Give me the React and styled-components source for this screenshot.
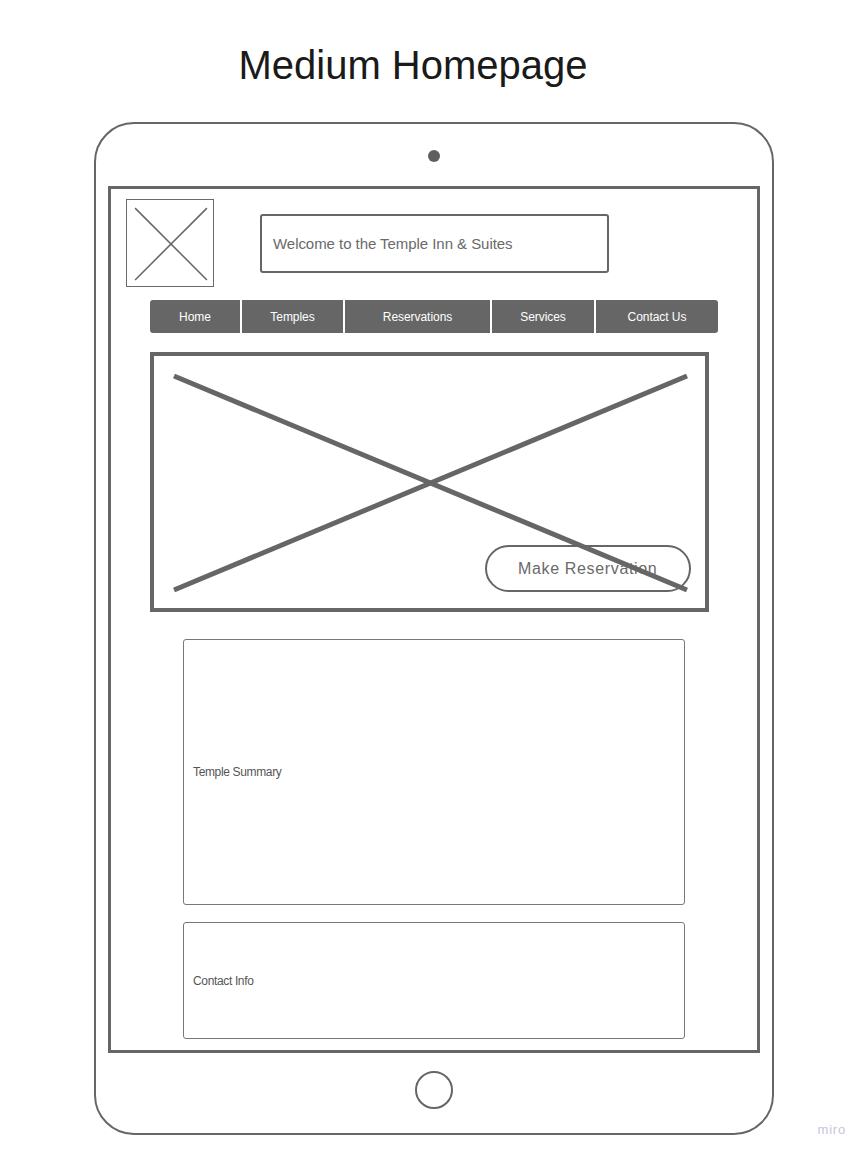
import React from "react";
import styled, { createGlobalStyle } from "styled-components";

const Global = createGlobalStyle`
  html, body { margin: 0; padding: 0; background: #ffffff; }
  body { font-family: "Liberation Sans", Arial, sans-serif; }
  * { box-sizing: border-box; }
`;

const Page = styled.div`
  position: relative;
  width: 866px;
  height: 1154px;
  padding-top: 45px;
  overflow: hidden;
`;

const Title = styled.h1`
  margin: 0;
  padding-right: 40px;
  text-align: center;
  font-family: "Liberation Sans", Arial, sans-serif;
  font-weight: 400;
  font-size: 40px;
  line-height: 40px;
  color: #1a1a1a;
`;

const Device = styled.div`
  margin: 37px 0 0 94px;
  width: 680px;
  height: 1013px;
  border: 2px solid #666;
  border-radius: 40px;
  display: flex;
  flex-direction: column;
  align-items: center;
  padding-top: 26px;
`;

const Camera = styled.div`
  width: 12px;
  height: 12px;
  border-radius: 50%;
  background: #5f5f5f;
  flex: none;
`;

const Screen = styled.div`
  margin-top: 24px;
  width: 652px;
  height: 867px;
  border: 3px solid #666;
  display: flex;
  flex-direction: column;
  flex: none;
`;

const HomeButton = styled.div`
  margin-top: 18px;
  width: 38px;
  height: 38px;
  border-radius: 50%;
  border: 2.5px solid #666;
  flex: none;
`;

const Header = styled.div`
  display: flex;
  align-items: center;
  gap: 46px;
  padding: 10px 0 0 15px;
`;

const LogoBox = styled.div`
  position: relative;
  width: 88px;
  height: 88px;
  border: 1.5px solid #6a6a6a;
  flex: none;
`;

const CrossSvg = styled.svg`
  position: absolute;
  inset: 0;
  width: 100%;
  height: 100%;
  overflow: visible;
`;

const WelcomeBox = styled.div`
  width: 349px;
  height: 59px;
  border: 2px solid #666;
  border-radius: 3px;
  display: flex;
  align-items: center;
  padding-left: 11px;
  font-size: 15px;
  color: #6a6a6a;
  letter-spacing: -0.05px;
`;

const Nav = styled.nav`
  margin: 13px 0 0 39px;
  width: 568px;
  height: 33px;
  display: flex;
  gap: 2px;
  border-radius: 3px;
  overflow: hidden;
`;

const NavItem = styled.div`
  width: ${(p) => p.$w}px;
  flex: none;
  background: #666;
  color: #fff;
  font-size: 12px;
  letter-spacing: -0.05px;
  display: flex;
  align-items: center;
  justify-content: center;
`;

const Hero = styled.div`
  position: relative;
  margin: 19px 0 0 39px;
  width: 559px;
  height: 260px;
  border: 4px solid #666;
`;

const ReserveButton = styled.div`
  position: absolute;
  left: 331px;
  top: 189px;
  width: 206px;
  height: 47px;
  border: 2px solid #666;
  border-radius: 24px;
  background: #fff;
  display: flex;
  align-items: center;
  padding-left: 31px;
  font-size: 16px;
  color: #6a6a6a;
  letter-spacing: 0.65px;
`;

const Panel = styled.div`
  margin: ${(p) => p.$top}px 0 0 72px;
  width: 502px;
  height: ${(p) => p.$h}px;
  border: 1.5px solid #777;
  border-radius: 3px;
  display: flex;
  align-items: center;
  padding-left: 9px;
  font-size: 12px;
  letter-spacing: -0.35px;
  color: #555;
`;

const Watermark = styled.div`
  position: absolute;
  right: 20px;
  top: 1122px;
  font-size: 13px;
  letter-spacing: 0.8px;
  color: #c6c6d9;
`;

const navItems = [
  { label: "Home", w: 90 },
  { label: "Temples", w: 101 },
  { label: "Reservations", w: 145 },
  { label: "Services", w: 102 },
  { label: "Contact Us", w: 122 },
];

export default function App() {
  return (
    <>
      <Global />
      <Page>
        <Title>Medium Homepage</Title>
        <Device>
          <Camera />
          <Screen>
            <Header>
              <LogoBox>
                <CrossSvg viewBox="0 0 85 85" preserveAspectRatio="none">
                  <line x1="8" y1="8" x2="79" y2="79" stroke="#666" strokeWidth="1.5" />
                  <line x1="79" y1="8" x2="8" y2="79" stroke="#666" strokeWidth="1.5" />
                </CrossSvg>
              </LogoBox>
              <WelcomeBox>Welcome to the Temple Inn &amp; Suites</WelcomeBox>
            </Header>
            <Nav>
              {navItems.map((n) => (
                <NavItem key={n.label} $w={n.w}>
                  {n.label}
                </NavItem>
              ))}
            </Nav>
            <Hero>
              <ReserveButton>Make Reservation</ReserveButton>
              <CrossSvg viewBox="0 0 551 252" preserveAspectRatio="none">
                <line x1="20" y1="20" x2="533" y2="234" stroke="#666" strokeWidth="5" />
                <line x1="20" y1="234" x2="533" y2="20" stroke="#666" strokeWidth="5" />
              </CrossSvg>
            </Hero>
            <Panel $top={27} $h={266}>Temple Summary</Panel>
            <Panel $top={17} $h={117}>Contact Info</Panel>
          </Screen>
          <HomeButton />
        </Device>
        <Watermark>miro</Watermark>
      </Page>
    </>
  );
}
